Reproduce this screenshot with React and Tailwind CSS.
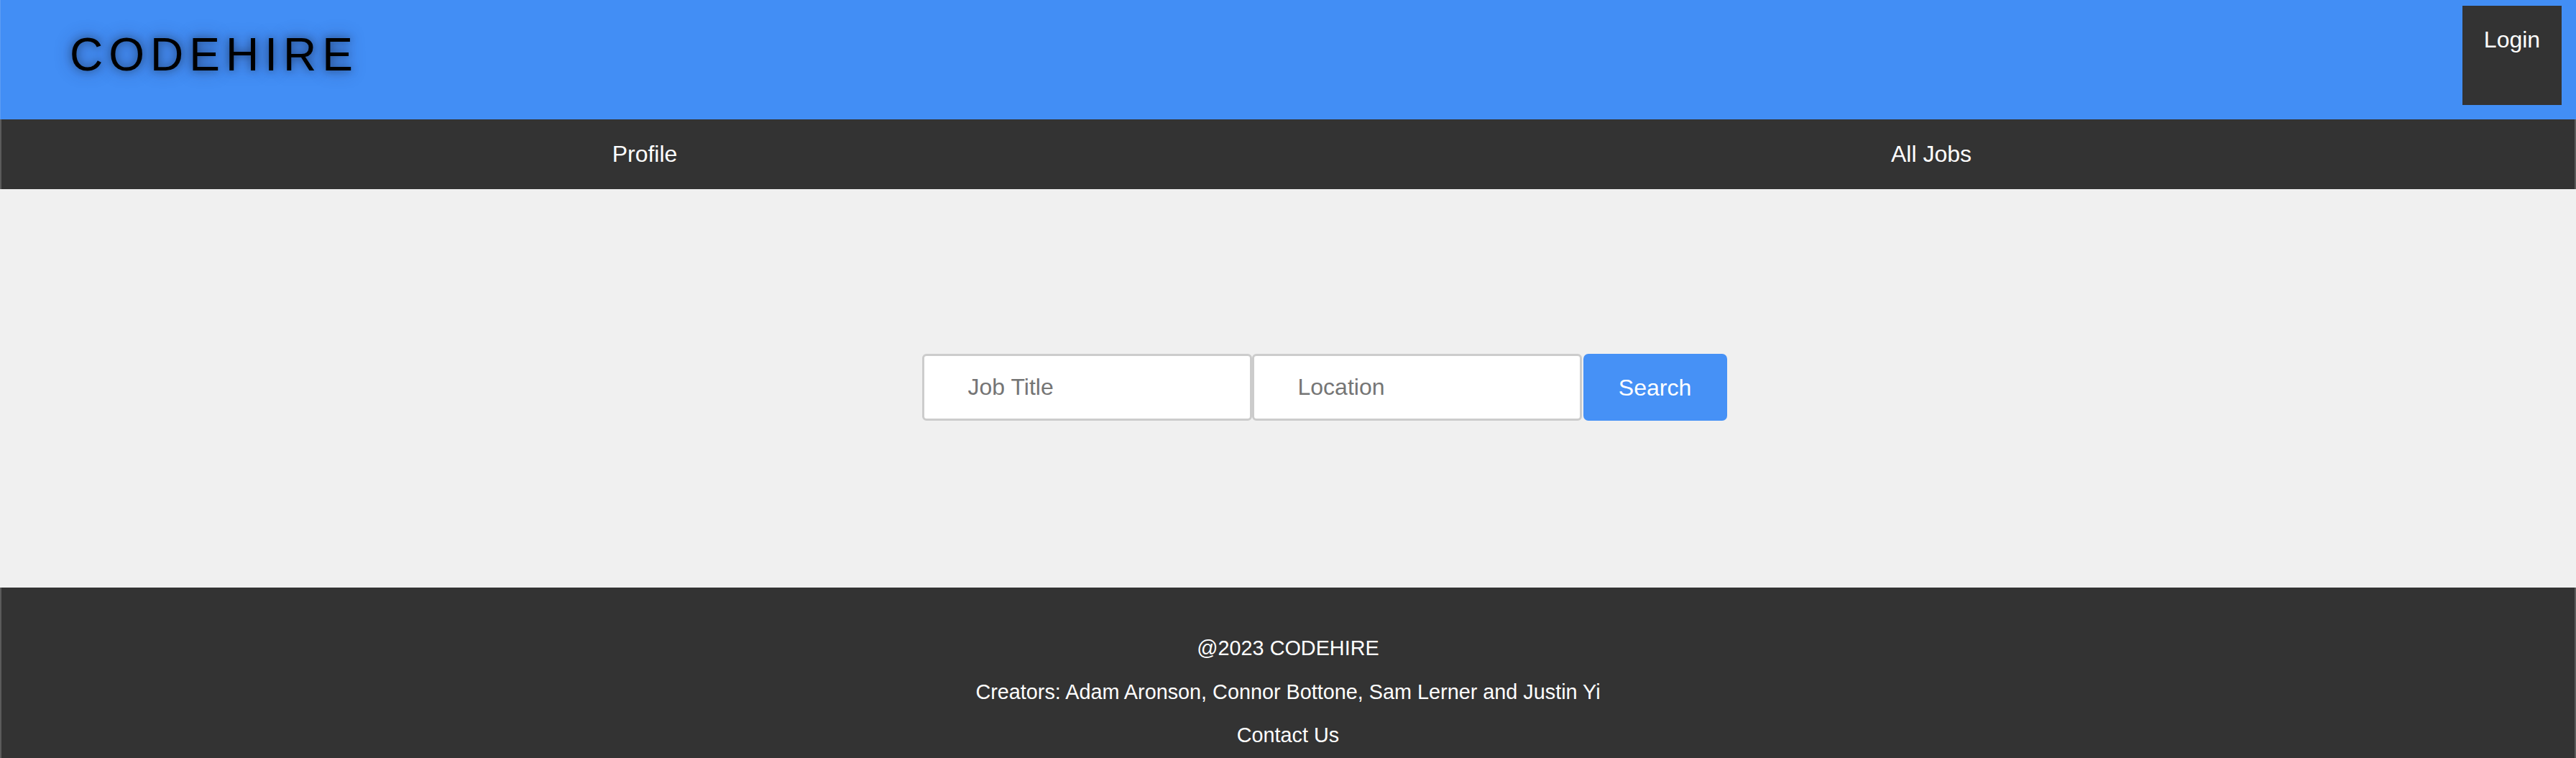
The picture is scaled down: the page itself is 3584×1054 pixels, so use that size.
import React from 'react';

const navLinks = ['Profile', 'All Jobs'];

const App = () => {
  return (
    <div className="h-[1054px] flex flex-col overflow-hidden font-['Liberation_Sans',Arial,sans-serif]">
      {/* Header */}
      <header className="h-[166px] shrink-0 bg-[#428ef5] border-l border-[#5c9cf3] flex justify-between items-start">
        <h1 className="pl-[96px] pt-[39px] text-[64px] leading-[74px] tracking-[8px] text-black font-normal [text-shadow:0_0_12px_rgba(0,0,0,0.45),0_0_24px_rgba(40,20,60,0.45)]">
          CODEHIRE
        </h1>
        <button className="mt-[8px] mr-[20px] w-[138px] h-[138px] bg-[#333333] text-white text-[32px] leading-[37px] pt-[29px] flex justify-center items-start">
          Login
        </button>
      </header>

      {/* Nav */}
      <nav className="h-[97px] shrink-0 bg-[#333333] border-x-2 border-[#5b5b5b] grid grid-cols-2">
        {navLinks.map((link) => (
          <a key={link} className="flex items-center justify-center text-white text-[32px] leading-[37px]">
            {link}
          </a>
        ))}
      </nav>

      {/* Search */}
      <main className="flex-1 bg-[#f0f0f0] flex items-center justify-center pl-[101px] pb-[3px]">
        <div className="flex items-stretch">
          <input
            type="text"
            placeholder="Job Title"
            className="w-[459px] h-[93px] bg-white border-[3px] border-[#cccccc] rounded-[6px] pl-[61px] text-[32px] text-black placeholder:text-[#757575] outline-none"
          />
          <input
            type="text"
            placeholder="Location"
            className="w-[459px] h-[93px] bg-white border-[3px] border-[#cccccc] rounded-[6px] pl-[61px] text-[32px] text-black placeholder:text-[#757575] outline-none"
          />
          <button className="ml-[2px] w-[200px] h-[93px] bg-[#4691f6] rounded-[7px] text-white text-[32px]">
            Search
          </button>
        </div>
      </main>

      {/* Footer */}
      <footer className="h-[237px] shrink-0 bg-[#333333] border-x-2 border-[#5b5b5b] pt-[68px] flex flex-col items-center gap-[27.5px] text-white text-[28.8px] leading-[33px]">
        <p>@2023 CODEHIRE</p>
        <p>Creators: Adam Aronson, Connor Bottone, Sam Lerner and Justin Yi</p>
        <p>Contact Us</p>
      </footer>
    </div>
  );
};

export default App;
